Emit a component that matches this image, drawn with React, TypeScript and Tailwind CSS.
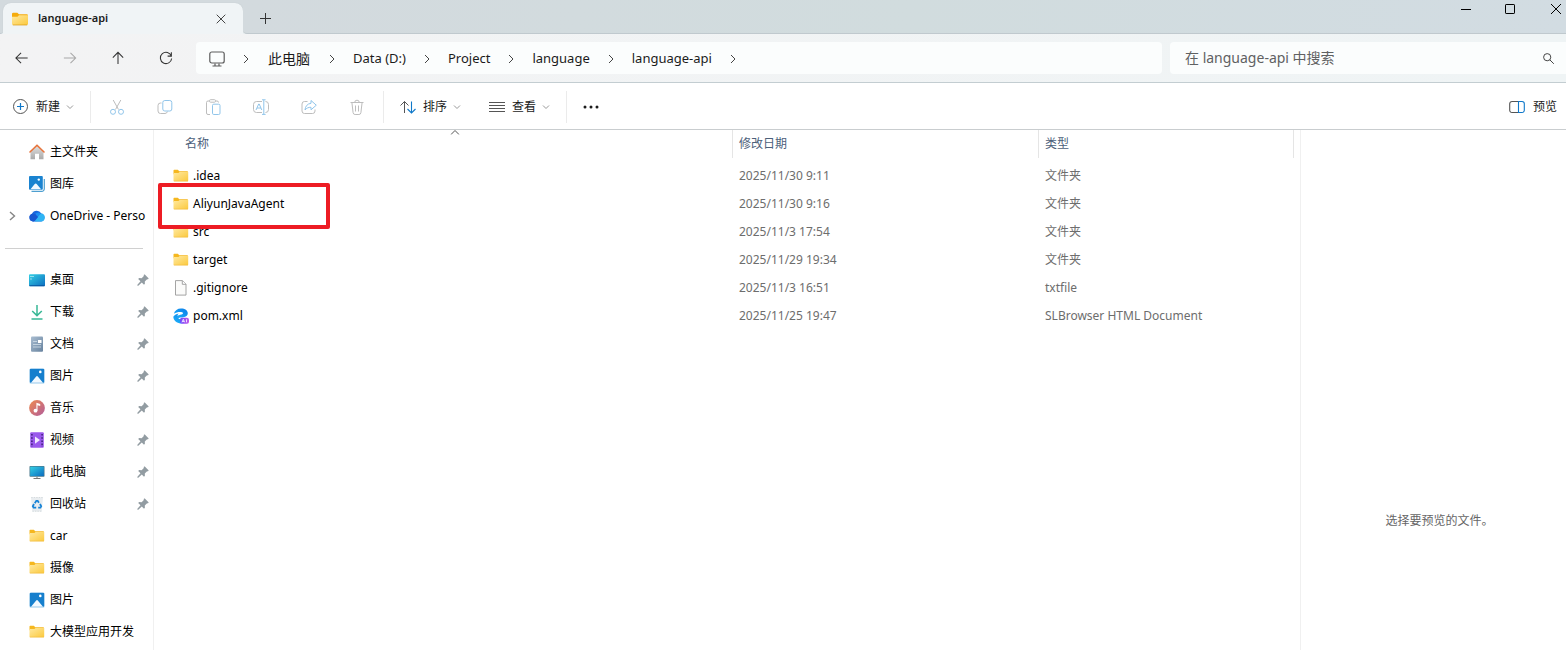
import React from "react";

type SidebarEntry = {
  label: string;
  icon: React.ReactNode;
  pinned?: boolean;
  expandable?: boolean;
};

type FileEntry = {
  name: string;
  icon: React.ReactNode;
  date: string;
  type: string;
  highlighted?: boolean;
};

const places: SidebarEntry[] = [
  { label: "主文件夹", icon: <HomeIcon /> },
  { label: "图库", icon: <GalleryIcon /> },
  { label: "OneDrive - Perso", icon: <CloudIcon />, expandable: true },
];

const quickAccess: SidebarEntry[] = [
  { label: "桌面", icon: <DesktopIcon />, pinned: true },
  { label: "下载", icon: <DownloadIcon />, pinned: true },
  { label: "文档", icon: <DocumentIcon />, pinned: true },
  { label: "图片", icon: <PictureIcon />, pinned: true },
  { label: "音乐", icon: <MusicIcon />, pinned: true },
  { label: "视频", icon: <VideoIcon />, pinned: true },
  { label: "此电脑", icon: <ComputerIcon />, pinned: true },
  { label: "回收站", icon: <RecycleIcon />, pinned: true },
  { label: "car", icon: <FolderIcon /> },
  { label: "摄像", icon: <FolderIcon /> },
  { label: "图片", icon: <PictureIcon /> },
  { label: "大模型应用开发", icon: <FolderIcon /> },
];

const files: FileEntry[] = [
  { name: ".idea", icon: <FolderIcon />, date: "2025/11/30 9:11", type: "文件夹" },
  { name: "AliyunJavaAgent", icon: <FolderIcon />, date: "2025/11/30 9:16", type: "文件夹", highlighted: true },
  { name: "src", icon: <FolderIcon />, date: "2025/11/3 17:54", type: "文件夹" },
  { name: "target", icon: <FolderIcon />, date: "2025/11/29 19:34", type: "文件夹" },
  { name: ".gitignore", icon: <FileIcon />, date: "2025/11/3 16:51", type: "txtfile" },
  { name: "pom.xml", icon: <BrowserIcon />, date: "2025/11/25 19:47", type: "SLBrowser HTML Document" },
];

const crumbs = ["Data (D:)", "Project", "language", "language-api"];

export default function App() {
  return (
    <div className="flex min-h-screen flex-col overflow-hidden bg-white font-['Noto_Sans','Noto_Sans_CJK_SC',sans-serif] text-xs text-black">
      <TitleBar />
      <NavBar />
      <Toolbar />
      <div className="flex flex-1">
        <Sidebar />
        <FileList />
        <aside className="w-[266px] shrink-0 border-l border-[#f0f0f0] pt-[382px] pl-3 text-center leading-[18px] text-[#666666]">
          选择要预览的文件。
        </aside>
      </div>
    </div>
  );
}

function TitleBar() {
  return (
    <header className="flex h-[34px] bg-[#f0f4f6]">
      <div className="w-[3px] rounded-br-sm border-b border-[#c0c9ce] bg-[#d3dade]" />
      <div className="w-60 bg-[#d3dade] pt-[3px]">
        <div className="flex h-[31px] items-center rounded-t-lg bg-[#f0f4f6] pr-[14px] pl-[9px] shadow-[0_0_1px_#b4bdc2]">
          <TabFolderIcon />
          <span className="ml-[10px] flex-1 text-[11px] font-semibold text-[#1b1b1b]">language-api</span>
          <button aria-label="关闭标签页" className="flex h-6 w-4 items-center justify-center">
            <svg width="10" height="10" viewBox="0 0 10 10" fill="none" stroke="#444">
              <path d="M.7.7l8.6 8.6M9.3.7L.7 9.3" />
            </svg>
          </button>
        </div>
      </div>
      <div className="flex flex-1 justify-between rounded-bl-sm border-b border-[#c0c9ce] bg-linear-to-r from-[#d3dade] via-[#d1dcde] to-[#d2dce2] pl-[14px]">
        <button aria-label="新建标签页" className="flex w-4 items-center justify-center pt-[3px]">
          <svg width="11" height="11" viewBox="0 0 11 11" fill="none" stroke="#333">
            <path d="M5.5 0v11M0 5.5h11" />
          </svg>
        </button>
        <div className="flex h-[18px] items-center gap-3">
          <button aria-label="最小化" className="flex h-full w-8 items-center justify-center">
            <svg width="10" height="10" viewBox="0 0 10 10" stroke="#000">
              <path d="M0 5.5h10" />
            </svg>
          </button>
          <button aria-label="最大化" className="flex h-full w-8 items-center justify-center">
            <svg width="10" height="10" viewBox="0 0 10 10" fill="none" stroke="#000">
              <rect x=".5" y=".5" width="9" height="9" rx=".6" />
            </svg>
          </button>
          <button aria-label="关闭" className="flex h-full w-7 items-center justify-end pr-[5px]">
            <svg width="10" height="10" viewBox="0 0 10 10" fill="none" stroke="#000">
              <path d="M0 0l10 10M10 0L0 10" />
            </svg>
          </button>
        </div>
      </div>
    </header>
  );
}

function NavBar() {
  return (
    <nav className="flex h-[49px] items-center border-b border-[#c3cdd1] bg-linear-to-r from-[#f3f3f4] to-[#eff4f5] pl-[6px]">
      <div className="mr-[14px] flex gap-4">
        <NavButton label="后退">
          <path d="M14.5 8.5H2M7.5 3L2 8.5 7.5 14" />
        </NavButton>
        <NavButton label="前进" disabled>
          <path d="M2 8.5h12.5M9 3l5.500 5.500L9 14" />
        </NavButton>
        <NavButton label="向上">
          <path d="M8.500 15V2.500M3 8l5.500-5.500L14 8" />
        </NavButton>
        <NavButton label="刷新">
          <path d="M14.200 6.500A6 6 0 1 0 14.500 9M14.200 2.500v4h-4" />
        </NavButton>
      </div>
      <div className="mr-2 flex h-8 flex-1 items-center rounded bg-[#fbfdfd] pt-px pl-[13px] text-[13px] text-[#1b1b1b]">
        <svg width="16" height="16" viewBox="0 0 16 16" fill="none" stroke="#5c5c5c" strokeWidth="1.2">
          <rect x=".8" y="1" width="14.400" height="11" rx="2" />
          <path d="M6 12.500v2.500M10 12.500v2.500M3.500 15h9" />
        </svg>
        <CrumbChevron />
        <button className="px-px text-sm">此电脑</button>
        {crumbs.map((crumb) => (
          <React.Fragment key={crumb}>
            <CrumbChevron />
            <button>{crumb}</button>
          </React.Fragment>
        ))}
        <CrumbChevron />
      </div>
      <label className="flex h-8 w-[396px] items-center rounded-l bg-[#fbfdfd] pr-3 pl-[15px]">
        <input
          type="text"
          aria-label="搜索"
          placeholder="在 language-api 中搜索"
          className="min-w-0 flex-1 bg-transparent text-sm outline-none placeholder:text-[#5f6162]"
        />
        <svg width="11" height="11" viewBox="0 0 11 11" fill="none" stroke="#444">
          <circle cx="4.200" cy="4.200" r="3.600" />
          <path d="M6.800 6.800l4 4" />
        </svg>
      </label>
    </nav>
  );
}

function NavButton({ label, disabled, children }: { label: string; disabled?: boolean; children: React.ReactNode }) {
  return (
    <button
      aria-label={label}
      disabled={disabled}
      className="flex h-8 w-8 items-center justify-center text-[#333] disabled:text-[#a8a8a8]"
    >
      <svg width="16" height="16" viewBox="0 0 17 17" fill="none" stroke="currentColor" strokeWidth="1.100">
        {children}
      </svg>
    </button>
  );
}

function CrumbChevron() {
  return (
    <span className="flex w-[42px] shrink-0 items-center justify-center">
      <svg width="6" height="10" viewBox="0 0 6 10" fill="none" stroke="#444">
        <path d="M1 1l4 4-4 4" />
      </svg>
    </span>
  );
}

function Toolbar() {
  return (
    <div className="flex h-[47px] items-center border-b border-[#c9cdcf] pt-px pr-[9px] pl-3 text-[#1b1b1b]">
      <button className="flex items-center">
        <svg width="17" height="17" viewBox="0 0 17 17" fill="none" stroke="#555">
          <circle cx="8.500" cy="8.500" r="7" />
          <path stroke="#0f78c9" strokeWidth="1.200" d="M8.500 5v7M5 8.500h7" />
        </svg>
        <span className="ml-[7px]">新建</span>
        <DropChevron />
      </button>
      <Separator className="ml-4" />
      <div className="mx-[10px] flex gap-4">
        <ToolButton label="剪切">
          <path d="M4.200 1l5.300 9.500M11.800 1L6.500 10.500" />
          <g stroke="#91c5ea">
            <circle cx="4" cy="12.800" r="2.500" />
            <circle cx="12" cy="12.800" r="2.500" />
          </g>
        </ToolButton>
        <ToolButton label="复制">
          <path d="M4.500 4H3.500a2.500 2.500 0 0 0-2.500 2.500v5.500A2.500 2.500 0 0 0 3.500 14.500h4.500A2.500 2.500 0 0 0 10.400 12.500" />
          <rect x="5.800" y="1.500" width="9" height="10.500" rx="2" stroke="#91c5ea" />
        </ToolButton>
        <ToolButton label="粘贴">
          <path d="M5 15.500H3A1.500 1.500 0 0 1 1.500 14V3.500A1.500 1.500 0 0 1 3 2h1.500M10.500 2H12a1.500 1.500 0 0 1 1.500 1.500" />
          <rect x="4.500" y=".7" width="6" height="2.500" rx="1" />
          <rect x="7.500" y="5.200" width="7.500" height="10.300" rx="1.300" stroke="#91c5ea" />
        </ToolButton>
        <ToolButton label="重命名">
          <path d="M9 2.500H3.500a3 3 0 0 0-3 3v5a3 3 0 0 0 3 3H9M12.500 2.500a3 3 0 0 1 3 3v5a3 3 0 0 1-3 3" />
          <path stroke="#91c5ea" d="M3 11l2.700-6h.5l2.600 6M4 9h4M10.800.8v14.600M9 .8h3.600M9 15.400h3.600" />
        </ToolButton>
        <ToolButton label="共享">
          <path d="M6.500 2.500H3.500A2.500 2.500 0 0 0 1 5v7a2.500 2.500 0 0 0 2.500 2.500h8A2.500 2.500 0 0 0 14 12v-1.500" />
          <path
            stroke="#91c5ea"
            strokeLinejoin="round"
            d="M10 1.500l5.300 4.700L10 10.800V8.300C7.500 8.200 5.500 9 4 11c.3-3.700 2.300-6.300 6-6.700z"
          />
        </ToolButton>
        <ToolButton label="删除">
          <path d="M1.500 3.500h13M5.700 3.500a2.300 2.300 0 0 1 4.600 0M2.900 3.500l1.200 10.200a2 2 0 0 0 2 1.800h3.800a2 2 0 0 0 2-1.800l1.200-10.200M6.500 6.500v6M9.500 6.500v6" />
        </ToolButton>
      </div>
      <Separator />
      <button className="ml-4 flex items-center">
        <svg width="16" height="16" viewBox="0 0 16 16" fill="none">
          <path stroke="#555" d="M4.500 14V2.500M.5 6.500l4-4 4 4" />
          <path stroke="#0f78c9" strokeWidth="1.100" d="M11.500 2.500V14M7.500 10l4 4 4-4" />
        </svg>
        <span className="ml-[7px]">排序</span>
        <DropChevron />
      </button>
      <button className="ml-7 flex items-center">
        <svg width="16" height="16" viewBox="0 0 16 16" stroke="#555">
          <path d="M0 3.500h16M0 6.500h16M0 9.500h16M0 12.500h16" />
        </svg>
        <span className="ml-[7px]">查看</span>
        <DropChevron />
      </button>
      <Separator className="ml-4" />
      <button aria-label="更多" className="ml-2 flex h-8 w-8 items-center justify-center">
        <svg width="16" height="4" viewBox="0 0 16 4" fill="#1b1b1b">
          <circle cx="2" cy="2" r="1.500" />
          <circle cx="8" cy="2" r="1.500" />
          <circle cx="14" cy="2" r="1.500" />
        </svg>
      </button>
      <button className="ml-auto flex items-center">
        <svg width="16" height="14" viewBox="0 0 16 14" fill="none" strokeWidth="1.100">
          <path stroke="#555" d="M9.500 1.500H3a2.300 2.300 0 0 0-2.300 2.300v6.400A2.300 2.300 0 0 0 3 12.500h6.500" />
          <path stroke="#0f78c9" d="M9.500 1.500H13a2.300 2.300 0 0 1 2.300 2.300v6.400a2.300 2.300 0 0 1-2.300 2.300H9.500z" />
        </svg>
        <span className="ml-2">预览</span>
      </button>
    </div>
  );
}

function Separator({ className = "" }: { className?: string }) {
  return <div className={`h-8 w-px bg-[#ebebeb] ${className}`} />;
}

function ToolButton({ label, children }: { label: string; children: React.ReactNode }) {
  return (
    <button aria-label={label} disabled className="flex h-8 w-8 items-center justify-center">
      <svg width="16" height="16" viewBox="0 0 16 16" fill="none" stroke="#bdbdbd">
        {children}
      </svg>
    </button>
  );
}

function DropChevron() {
  return (
    <svg className="ml-[6px]" width="8" height="6" viewBox="0 0 8 6" fill="none" stroke="#999">
      <path d="M1 1.500l3 3 3-3" />
    </svg>
  );
}

function Sidebar() {
  return (
    <aside className="w-[154px] shrink-0 border-r border-[#f0f0f0] pt-[6px]">
      {places.map((entry) => (
        <SidebarRow key={entry.label} entry={entry} />
      ))}
      <div className="flex h-8 items-center pr-[10px] pl-[5px]">
        <div className="h-px flex-1 bg-[#d0d0d0]" />
      </div>
      {quickAccess.map((entry, i) => (
        <SidebarRow key={i} entry={entry} />
      ))}
    </aside>
  );
}

function SidebarRow({ entry }: { entry: SidebarEntry }) {
  return (
    <a href="#" className="flex h-8 items-center pr-1">
      <span className="mr-[5px] flex w-6 shrink-0 justify-center">
        {entry.expandable && (
          <svg width="7" height="10" viewBox="0 0 7 10" fill="none" stroke="#858585" strokeWidth="1.400">
            <path d="M1 1l4.500 4L1 9" />
          </svg>
        )}
      </span>
      {entry.icon}
      <span className="ml-[5px] flex-1 whitespace-nowrap">{entry.label}</span>
      {entry.pinned && <PinIcon />}
    </a>
  );
}

function FileList() {
  return (
    <main className="min-w-0 flex-1">
      <table className="w-[1140px] table-fixed border-separate border-spacing-0 text-left">
        <colgroup>
          <col className="w-[578px]" />
          <col className="w-[306px]" />
          <col className="w-[256px]" />
        </colgroup>
        <thead>
          <tr className="h-7 text-[#4c607a]">
            <th className="p-0 pl-6 font-normal">
              <div className="relative flex h-7 items-center pl-[7px]">
                名称
                <svg
                  className="absolute top-0 left-1/2 -translate-x-1/2"
                  width="9"
                  height="5"
                  viewBox="0 0 9 5"
                  fill="none"
                  stroke="#555"
                >
                  <path d="M.5 4.500l4-4 4 4" />
                </svg>
              </div>
            </th>
            <th className="border-l border-[#e5e5e5] p-0 pl-[6px] font-normal">修改日期</th>
            <th className="border-x border-[#e5e5e5] p-0 pl-[6px] font-normal">类型</th>
          </tr>
        </thead>
        <tbody className="before:block before:h-1">
          {files.map((file) => (
            <tr key={file.name} className="h-7 text-[#6d6d6d]">
              <td className="relative p-0 pl-[19px]">
                <div className="flex items-center text-black">
                  {file.icon}
                  <span className="ml-1">{file.name}</span>
                </div>
                {file.highlighted && (
                  <div className="absolute -top-[7px] left-1 z-10 h-[46px] w-[172px] rounded-xs border-4 border-[#ed1c24]" />
                )}
              </td>
              <td className="p-0 pl-[7px]">{file.date}</td>
              <td className="p-0 pl-[7px]">{file.type}</td>
            </tr>
          ))}
        </tbody>
      </table>
    </main>
  );
}

/* ---------- icons ---------- */

function Icon({ children }: { children: React.ReactNode }) {
  return (
    <svg className="shrink-0" width="16" height="16" viewBox="0 0 16 16" fill="none">
      {children}
    </svg>
  );
}

function FolderIcon() {
  return (
    <Icon>
      <defs>
        <linearGradient id="folder" x1="0" y1="0" x2="1" y2="1">
          <stop offset="0" stopColor="#ffe9a0" />
          <stop offset="1" stopColor="#fbc93d" />
        </linearGradient>
      </defs>
      <path fill="#f5b71f" d="M.5 2.500A.7.700 0 0 1 1.200 1.800h3.600l1.500 1.500h8.500v3H.5z" />
      <path fill="url(#folder)" d="M.5 5h5l1-1h8.700v8.500a.7.700 0 0 1-.7.700H1.200a.7.700 0 0 1-.7-.7z" />
      <path stroke="#f0b93a" strokeWidth=".6" d="M.8 13.100h14.200" />
    </Icon>
  );
}

function TabFolderIcon() {
  return (
    <svg width="16" height="16" viewBox="0 0 16 16">
      <path fill="#f5ab0c" d="M0 3a1.300 1.300 0 0 1 1.300-1.300h4L7 3.200h7.700A1.300 1.300 0 0 1 16 4.500V8H0z" />
      <path fill="url(#folder)" d="M0 5.800h5.500L7 4.300h9v8.500a1.300 1.300 0 0 1-1.300 1.300H1.300A1.300 1.300 0 0 1 0 12.800z" />
      <path stroke="#d99a12" strokeWidth=".7" d="M.8 14h14.400" />
    </svg>
  );
}

function FileIcon() {
  return (
    <Icon>
      <path fill="#fbfbfa" stroke="#9a9a9a" strokeWidth=".9" d="M2.500.6h7l3.500 3.500v11H2.500z" />
      <path fill="#fff" stroke="#9a9a9a" strokeWidth=".9" d="M9.300.8v3.500H13" />
    </Icon>
  );
}

function BrowserIcon() {
  return (
    <Icon>
      <defs>
        <linearGradient id="browser" x1="0" y1="1" x2="1" y2="0">
          <stop offset="0" stopColor="#1fb4fa" />
          <stop offset="1" stopColor="#0a7be8" />
        </linearGradient>
        <linearGradient id="ai" x1="0" y1="0" x2="1" y2="0">
          <stop offset="0" stopColor="#6b4dff" />
          <stop offset="1" stopColor="#c455e8" />
        </linearGradient>
      </defs>
      {/* upper hook of the "e", then the lower bowl */}
      <path fill="url(#browser)" d="M.8 5.800C1.800 2.400 4.500.4 8 .4c4 0 6.800 2 6.800 4.900 0 2.500-1.800 3.600-4.600 4-2.400.3-4.200.2-5.200 1.200L3.700 8.300C5 7.200 7 7 8.600 6.500c1.700-.5 2-1.800.5-2.200C6.600 3.600 3.600 4.200.8 5.800z" />
      <path fill="url(#browser)" d="M.3 8.800C1.700 7 3.500 6 5.600 5.600 4 7.200 4 9.300 5.500 10.500c1.700 1.300 4.700 1.400 8.700.5-1.300 2.700-3.600 4.400-6.400 4.400C3.800 15.400.6 12.700.3 8.800z" />
      <rect x="7" y="9.800" width="9" height="6" rx="2" fill="url(#ai)" />
      <path stroke="#fff" strokeWidth=".8" d="M9 14.300l1.300-3 1.300 3M9.500 13.400h1.700M13.500 11.300v3" />
    </Icon>
  );
}

function HomeIcon() {
  return (
    <Icon>
      <defs>
        <linearGradient id="wall" x1="0" y1="0" x2="0" y2="1">
          <stop offset="0" stopColor="#e2e2e2" />
          <stop offset="1" stopColor="#a9a9a9" />
        </linearGradient>
      </defs>
      <path fill="url(#wall)" d="M1.500 7L8 1.300 14.500 7v8.300H10V9.800H6v5.500H1.500z" />
      <path stroke="#e8743b" strokeWidth="1.600" strokeLinecap="round" strokeLinejoin="round" d="M1 8l7-6.800L15 8" />
    </Icon>
  );
}

function GalleryIcon() {
  return (
    <Icon>
      <path stroke="#4e9fd0" strokeWidth="1.200" d="M2.500 15.300h10.300a2.500 2.500 0 0 0 2.500-2.500V3" />
      <rect width="13.800" height="13.800" rx="1" fill="#1a83d0" />
      <circle cx="9.800" cy="3.600" r="1.200" fill="#fff" />
      <path fill="#f2f9ff" d="M1.500 13.300l4-5a1.500 1.500 0 0 1 2.400 0l4.200 5z" />
    </Icon>
  );
}

function PictureIcon() {
  return (
    <Icon>
      <rect x=".5" y=".7" width="15" height="15" rx="1.200" fill="#b8dcf2" />
      <rect x=".8" y=".8" width="14.400" height="13.900" rx="1" fill="#167fcd" />
      <circle cx="11.300" cy="3.900" r="1.300" fill="#fff" />
      <path fill="#f2f9ff" d="M2 14.700l5-6a1.300 1.300 0 0 1 2 0l5 6z" />
    </Icon>
  );
}

function CloudIcon() {
  return (
    <Icon>
      <path fill="#1a66dc" d="M4 13.500A4 4 0 0 1 3 5.800 5.200 5.200 0 0 1 12.300 5.500 4.100 4.100 0 0 1 12.200 13.500z" />
      <path fill="#1b8df0" d="M6.500 5.500A5.200 5.200 0 0 1 12.300 5.500L8 9z" />
      <path fill="#2fb4f4" d="M5.500 13.500l4.500-6.300a4 4 0 0 1 3.200-1.600 4.100 4.100 0 0 1-1 7.900z" />
      <path fill="#1857d0" d="M3 5.800c2.500-.5 3.800.7 6 3.200l-4 4.500H4A4 4 0 0 1 3 5.800z" />
    </Icon>
  );
}

function DesktopIcon() {
  return (
    <Icon>
      <defs>
        <linearGradient id="screen" x1="0" y1="0" x2="1" y2="1">
          <stop offset="0" stopColor="#34d0e4" />
          <stop offset="1" stopColor="#0c6cc0" />
        </linearGradient>
      </defs>
      <rect y="2.300" width="16" height="12" rx="1" fill="url(#screen)" />
      <path stroke="#0b579f" d="M.5 13.700h15" />
      <path fill="#fff" d="M1.500 4h1v1h-1zM1.500 6.500h1v1h-1zM3.500 4h1v1h-1z" />
    </Icon>
  );
}

function DownloadIcon() {
  return (
    <Icon>
      <path stroke="#38b896" strokeWidth="1.500" d="M8 1v10.500M3.200 7L8 11.600 12.800 7M2.500 15h11" />
    </Icon>
  );
}

function DocumentIcon() {
  return (
    <Icon>
      <defs>
        <linearGradient id="doc" x1="0" y1="0" x2="1" y2="1">
          <stop offset="0" stopColor="#a9bdd1" />
          <stop offset="1" stopColor="#68839f" />
        </linearGradient>
      </defs>
      <rect x="2" y=".5" width="12" height="15.200" rx="1" fill="url(#doc)" />
      <path stroke="#d3dfea" strokeWidth=".8" d="M4 5.500h4M4 8.500h8M4 11h8" />
      <rect x="9" y="4" width="3.500" height="3" fill="#fff" />
    </Icon>
  );
}

function MusicIcon() {
  return (
    <Icon>
      <defs>
        <linearGradient id="music" x1="0" y1="0" x2="1" y2="1">
          <stop offset="0" stopColor="#ef8b4f" />
          <stop offset="1" stopColor="#b15c9b" />
        </linearGradient>
      </defs>
      <circle cx="8" cy="8" r="7.900" fill="url(#music)" />
      <circle cx="6.500" cy="10.700" r="1.900" fill="#fff" />
      <path fill="#fff" d="M7.400 2.800l3.800 1.300v2L8.500 5.300v5.400H7.400z" />
    </Icon>
  );
}

function VideoIcon() {
  return (
    <Icon>
      <rect x="1.200" y=".3" width="13.600" height="15.500" rx="1" fill="#9a58ec" />
      <path stroke="#3f1f7a" strokeWidth="1.500" strokeDasharray="1.600 1.600" d="M2.900 2v13M13.100 2v13" />
      <path fill="#f3eaff" d="M6 4.500L11 8l-5 3.700z" />
    </Icon>
  );
}

function ComputerIcon() {
  return (
    <Icon>
      <rect x=".5" y="2" width="15" height="10.800" rx=".8" fill="#49788c" />
      <rect x="1.200" y="2.700" width="13.600" height="9.300" fill="url(#screen)" />
      <path stroke="#777" d="M8 12.800v1.500M4.500 14.500h7" />
    </Icon>
  );
}

function RecycleIcon() {
  return (
    <Icon>
      <path fill="#e9edf0" d="M2 1.500h12l-1.300 14H3.300z" />
      <path stroke="#cdd3d7" strokeWidth=".8" strokeDasharray="1.500 1" d="M2.200 1.500h11.600M3.400 15.200h9.200" />
      <g stroke="#1783d6" strokeWidth="1.800">
        <path d="M5.800 7.200l1.500-2.400h1.400l1.200 1.900" />
        <path d="M11 8l1.200 2.200-.8 1.500H9.200" />
        <path d="M7.200 11.700H4.600l-.8-1.500L5 8" />
      </g>
    </Icon>
  );
}

function PinIcon() {
  return (
    <svg className="shrink-0" width="12" height="12" viewBox="0 0 12 12" fill="#929ca2">
      <path d="M7 .5h.8l3.700 3.700v.8l-1.700.4-2 2 .1 2.400-.9.900-2.200-2.200L1.300 11.700H.4v-.9L3.500 7.300 1.200 5l.9-.9 2.500.1 2-2z" />
    </svg>
  );
}
